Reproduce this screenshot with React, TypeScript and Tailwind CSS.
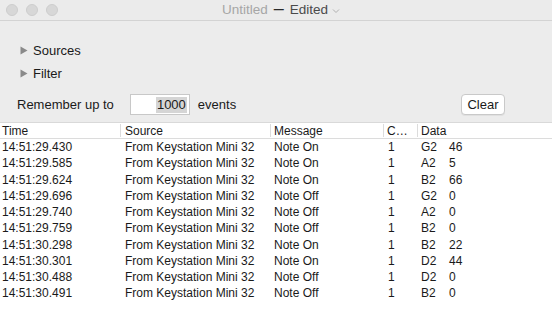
import React from "react";

const rows: [string, string, string, string, string, string][] = [
  ["14:51:29.430", "From Keystation Mini 32", "Note On", "1", "G2", "46"],
  ["14:51:29.585", "From Keystation Mini 32", "Note On", "1", "A2", "5"],
  ["14:51:29.624", "From Keystation Mini 32", "Note On", "1", "B2", "66"],
  ["14:51:29.696", "From Keystation Mini 32", "Note Off", "1", "G2", "0"],
  ["14:51:29.740", "From Keystation Mini 32", "Note Off", "1", "A2", "0"],
  ["14:51:29.759", "From Keystation Mini 32", "Note Off", "1", "B2", "0"],
  ["14:51:30.298", "From Keystation Mini 32", "Note On", "1", "B2", "22"],
  ["14:51:30.301", "From Keystation Mini 32", "Note On", "1", "D2", "44"],
  ["14:51:30.488", "From Keystation Mini 32", "Note Off", "1", "D2", "0"],
  ["14:51:30.491", "From Keystation Mini 32", "Note Off", "1", "B2", "0"],
];

function Tri() {
  return (
    <svg width="8" height="9" viewBox="0 0 8 9" className="mr-[5px]">
      <path d="M0.5 0.5 L7.5 4.5 L0.5 8.5 Z" fill="#8a8a8a" />
    </svg>
  );
}

export default function App() {
  return (
    <div
      className="w-[552px] h-[315px] bg-[#ececec] flex flex-col overflow-hidden text-[#1a1a1a]"
      style={{ fontFamily: '"Liberation Sans", Arial, sans-serif' }}
    >
      {/* title bar */}
      <div className="h-[21px] shrink-0 bg-[#ebebeb] border-b border-[#d3d3d3] relative flex items-center justify-center">
        <div className="absolute left-[6px] top-[4px] flex gap-[8px]">
          <div className="w-[12px] h-[12px] rounded-full bg-[#d7d7d7] border border-[#cdcdcd]" />
          <div className="w-[12px] h-[12px] rounded-full bg-[#d7d7d7] border border-[#cdcdcd]" />
          <div className="w-[12px] h-[12px] rounded-full bg-[#d7d7d7] border border-[#cdcdcd]" />
        </div>
        <div className="flex items-center text-[13.5px] leading-none ml-[10px]">
          <span className="text-[#a6a6a6]">Untitled</span>
          <span className="text-[#2a2a2a] mx-[6px] font-bold text-[10px]">—</span>
          <span className="text-[#4a4a4a]">Edited</span>
          <svg width="8" height="6" viewBox="0 0 8 6" className="ml-[4px] mt-[1px]">
            <path d="M1 1.5 L4 4.5 L7 1.5" stroke="#b0b0b0" strokeWidth="1" fill="none" />
          </svg>
        </div>
      </div>

      {/* controls */}
      <div className="flex flex-col pl-[20px] pt-[21px] text-[13px] leading-none">
        <div className="flex items-center h-[16px]">
          <Tri />
          <span>Sources</span>
        </div>
        <div className="flex items-center h-[16px] mt-[7px]">
          <Tri />
          <span>Filter</span>
        </div>
      </div>
      <div className="flex items-center pl-[17px] pr-[47px] mt-[13px] h-[21px] text-[13px]">
        <span>Remember up to</span>
        <div className="ml-[16px] w-[60px] h-[21px] bg-white border border-[#c8c8c8] flex items-center justify-end pr-[2px]">
          <span className="bg-[#d5d5d5] px-[1px] leading-[16px]">1000</span>
        </div>
        <span className="ml-[8px]">events</span>
        <div className="ml-auto w-[44px] h-[21px] rounded-[4px] bg-white border border-[#c9c9c9] shadow-[0_1px_0_rgba(0,0,0,0.05)] flex items-center justify-center text-[13px]">
          Clear
        </div>
      </div>

      {/* table */}
      <div className="mt-[7px] flex-1 bg-white border-t border-[#d9d9d9] text-[12px] leading-none">
        <div className="h-[16px] flex items-center border-b border-[#dcdcdc]">
          <div className="w-[121px] pl-[2px] border-r border-[#dcdcdc] h-[13px] flex items-center">Time</div>
          <div className="w-[150px] pl-[4px] border-r border-[#dcdcdc] h-[13px] flex items-center">Source</div>
          <div className="w-[113px] pl-[3px] border-r border-[#dcdcdc] h-[13px] flex items-center">Message</div>
          <div className="w-[34px] pl-[3px] border-r border-[#dcdcdc] h-[13px] flex items-center">C…</div>
          <div className="flex-1 pl-[3px] h-[13px] flex items-center">Data</div>
        </div>
        <div>
          {rows.map((r, i) => (
            <div key={i} className="h-[16.25px] flex items-center">
              <div className="w-[121px] pl-[2px]">{r[0]}</div>
              <div className="w-[150px] pl-[4px]">{r[1]}</div>
              <div className="w-[113px] pl-[3px]">{r[2]}</div>
              <div className="w-[34px] pl-[4px]">{r[3]}</div>
              <div className="flex-1 pl-[3px] flex">
                <span className="w-[28px]">{r[4]}</span>
                <span>{r[5]}</span>
              </div>
            </div>
          ))}
        </div>
      </div>
    </div>
  );
}
